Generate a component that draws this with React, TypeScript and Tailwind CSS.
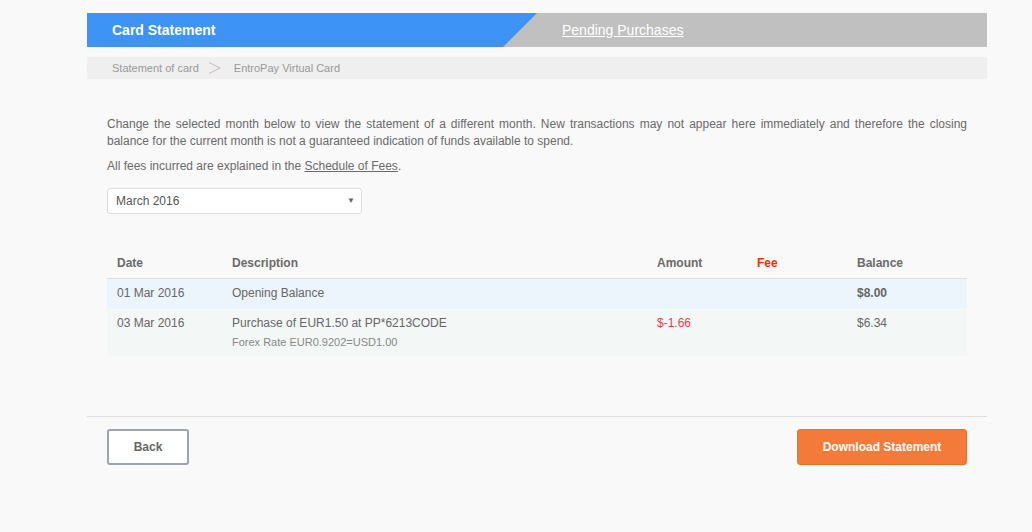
import { useState } from "react";

type Row = {
  date: string;
  desc: string;
  sub?: string;
  amount?: string;
  fee?: string;
  balance: string;
  bold?: boolean;
};

const rows: Row[] = [
  { date: "01 Mar 2016", desc: "Opening Balance", balance: "$8.00", bold: true },
  {
    date: "03 Mar 2016",
    desc: "Purchase of EUR1.50 at PP*6213CODE",
    sub: "Forex Rate EUR0.9202=USD1.00",
    amount: "$-1.66",
    balance: "$6.34",
  },
];

export default function App() {
  const [month, setMonth] = useState("March 2016");

  return (
    <div className="min-h-[532px] w-full bg-[#f9f9f9] font-['Liberation_Sans',Arial,sans-serif] text-[#666]">
      <div className="ml-[87px] w-[900px] pt-[13px]">
        {/* Tabs */}
        <div className="relative flex h-[34px] items-center bg-[#c0c0c0]">
          <div className="flex h-full w-[450px] items-center bg-[#3d93f6] pl-[25px] [clip-path:polygon(0_0,100%_0,calc(100%-34px)_100%,0_100%)]">
            <span className="text-[14px] font-bold text-white">Card Statement</span>
          </div>
          <a className="ml-[25px] text-[14px] text-white underline">Pending Purchases</a>
        </div>

        {/* Breadcrumb */}
        <div className="mt-[10px] flex h-[22px] items-center bg-[#efefef] pl-[25px] text-[11px] text-[#999]">
          <span>Statement of card</span>
          <svg className="ml-[9px] mr-[13px] h-[14px] w-[13px]" viewBox="0 0 13 14" fill="none">
            <path d="M1 1.5l11 5.5-11 5.5" stroke="#bdbdbd" strokeWidth="1" />
          </svg>
          <span>EntroPay Virtual Card</span>
        </div>

        {/* Content */}
        <div className="px-[20px] pt-[37px]">
          <p className="text-justify text-[12px] leading-[17px] text-[#6a6a6a]">
            Change the selected month below to view the statement of a different month. New
            transactions may not appear here immediately and therefore the closing balance for
            the current month is not a guaranteed indication of funds available to spend.
          </p>
          <p className="mt-[8px] text-[12px] leading-[17px] text-[#6a6a6a]">
            All fees incurred are explained in the{" "}
            <a className="underline">Schedule of Fees</a>.
          </p>

          <div className="relative mt-[13px] h-[26px] w-[255px]">
            <select
              value={month}
              onChange={(e) => setMonth(e.target.value)}
              className="h-full w-full appearance-none rounded-[3px] border border-[#dcdcdc] bg-white pl-[8px] text-[12px] text-[#555] outline-none"
            >
              <option>March 2016</option>
              <option>February 2016</option>
              <option>January 2016</option>
            </select>
            <span className="pointer-events-none absolute right-[7px] top-[7px] text-[8px] text-[#666]">
              ▼
            </span>
          </div>

          {/* Table */}
          <table className="mt-[37px] w-full table-fixed border-collapse text-left text-[12px]">
            <colgroup>
              <col className="w-[125px]" />
              <col className="w-[425px]" />
              <col className="w-[100px]" />
              <col className="w-[100px]" />
              <col />
            </colgroup>
            <thead>
              <tr className="h-[27px] border-b border-[#dedede] align-top">
                <th className="pl-[10px] pt-[5px] leading-[14px] font-bold text-[#6a6a6a]">Date</th>
                <th className="pt-[5px] leading-[14px] font-bold text-[#6a6a6a]">Description</th>
                <th className="pt-[5px] leading-[14px] font-bold text-[#6a6a6a]">Amount</th>
                <th className="pt-[5px] leading-[14px] font-bold text-[#ff2a00]">Fee</th>
                <th className="pt-[5px] leading-[14px] font-bold text-[#6a6a6a]">Balance</th>
              </tr>
            </thead>
            <tbody>
              {rows.map((r, i) => (
                <tr
                  key={i}
                  className={
                    i === 0
                      ? "h-[30px] bg-[#edf5fc] leading-[16px]"
                      : "bg-[#f3f7f5] align-top leading-[16px]"
                  }
                >
                  <td className={i === 0 ? "pl-[10px]" : "pl-[10px] pt-[7px]"}>{r.date}</td>
                  <td className={i === 0 ? "" : "pt-[7px] pb-[7px]"}>
                    <div>{r.desc}</div>
                    {r.sub && (
                      <div className="mt-[4px] text-[11px] leading-[14px] text-[#888]">{r.sub}</div>
                    )}
                  </td>
                  <td className={i === 0 ? "text-[#f0394f]" : "pt-[7px] text-[#f0394f]"}>
                    {r.amount}
                  </td>
                  <td className={i === 0 ? "" : "pt-[7px]"}>{r.fee}</td>
                  <td className={(i === 0 ? "" : "pt-[7px] ") + (r.bold ? "font-bold" : "")}>
                    {r.balance}
                  </td>
                </tr>
              ))}
            </tbody>
          </table>
        </div>

        {/* Footer */}
        <div className="mt-[60px] border-t border-[#dedede] px-[20px] pt-[12px]">
          <div className="flex items-center justify-between">
            <button className="h-[36px] w-[82px] rounded-[3px] border-2 border-[#9ca4ae] bg-white text-[12px] font-bold text-[#666]">
              Back
            </button>
            <button className="h-[36px] w-[170px] rounded-[3px] border border-[#e9731f] bg-[#f47a3a] text-[12px] font-bold text-white">
              Download Statement
            </button>
          </div>
        </div>
      </div>
    </div>
  );
}
